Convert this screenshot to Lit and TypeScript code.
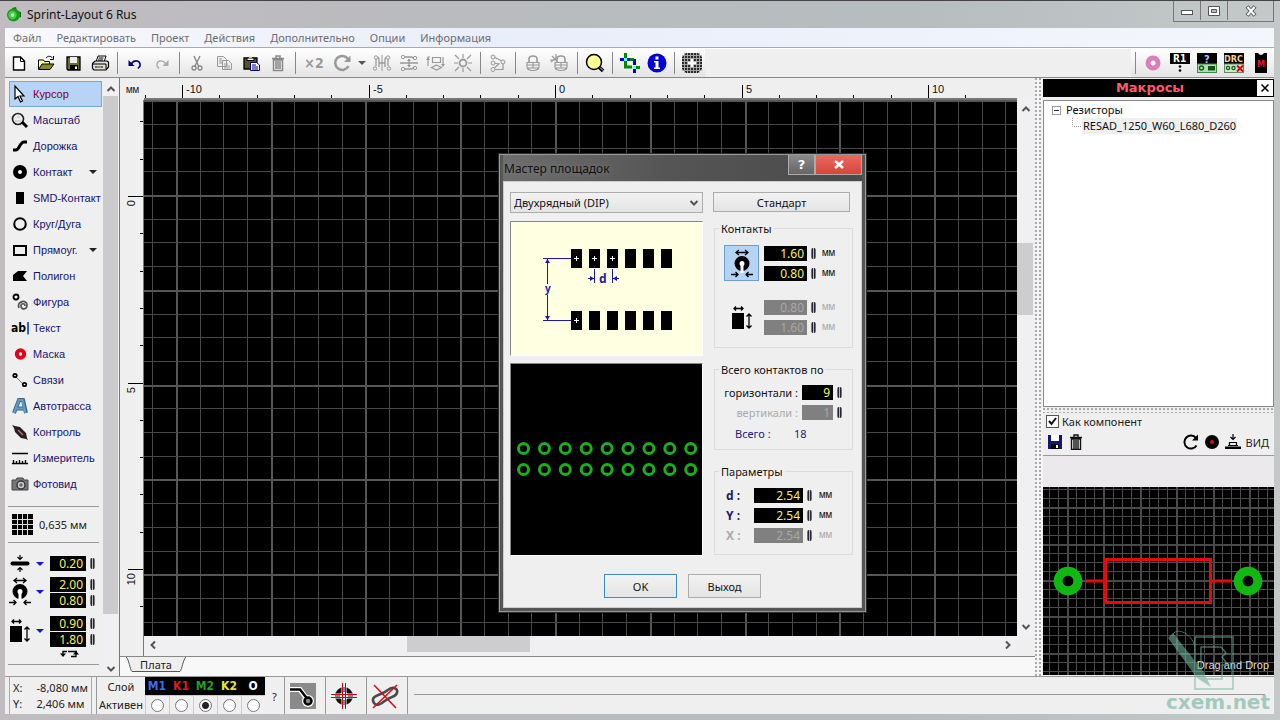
import { LitElement, html, svg, css } from "lit";
import { customElement } from "lit/decorators.js";

const icon = (body: unknown, w = 20, h = 20) =>
  html`<svg width=${w} height=${h} viewBox="0 0 ${w} ${h}" aria-hidden="true">${body}</svg>`;

const range = (from: number, to: number) =>
  Array.from({ length: Math.max(0, to - from + 1) }, (_, i) => from + i);

/* Icons of the upper toolbar */
const I = {
  file: svg`<path d="M4.500 4h7l4 4v9h-11z" fill="#fff" stroke="#000" stroke-width="1.400"/><path d="M11.500 4v4.500H16" fill="none" stroke="#000"/>`,
  open: svg`<path d="M2.500 16V7h5l1 1.500h5V11" fill="#ffff9c" stroke="#000"/><path d="M2.500 16.500 6 11h12l-4 5.500z" fill="#8a8a2c" stroke="#000"/><path d="M10 5c2-2.500 5-2 6.500 0M17.500 3v3.500H14" fill="none" stroke="#000"/>`,
  save: svg`<path d="M4 4h13v13H5l-1-1z" fill="#6e6e28" stroke="#000" stroke-width="1.300"/><path d="M7 4h7v6H7z" fill="#eee"/><path d="M7 12h8v5H7z" fill="#000"/><path d="M12 13.500h2V16h-2z" fill="#fff"/>`,
  print: svg`<path d="M6 9 8 3h8l-2 6" fill="#fff" stroke="#000"/><path d="M8.500 5h5M8 7h5" stroke="#000"/><path d="M2.500 10.500 5 8h12l1.500 1v5L16 17H4l-1.500-1.500z" fill="#ddd" stroke="#000" stroke-width="1.200"/><path d="M3 11h13v5M5 14h8" fill="none" stroke="#000"/><path d="M7 14h4" stroke="#cc0" stroke-width="1"/>`,
  undo: svg`<path d="M6 11.500C9 6 16 7 15 13l-2 2.500" fill="none" stroke="#00007c" stroke-width="1.600"/><path d="M3.500 7v6h6z" fill="#00007c"/>`,
  redo: svg`<path d="M14 11.500C11 6 4 7 5 13l2 2.500" fill="none" stroke="#aaa" stroke-width="1.400"/><path d="M16.500 7v6h-6z" fill="#aaa"/>`,
  cut: svg`<path d="M7 3l4.500 10M13 3 8 13" stroke="#888" stroke-width="1.400" fill="none"/><circle cx="7" cy="15" r="2" fill="none" stroke="#888" stroke-width="1.300"/><circle cx="13" cy="15" r="2" fill="none" stroke="#888" stroke-width="1.300"/>`,
  copy: svg`<path d="M3.500 3.500h6l3 3v7h-9zM8.500 7.500h6l3 3v6h-9z" fill="#eee" stroke="#999"/><path d="M5 6h3M5 8h3M5 10h3M10 11h4M10 13h6M10 15h6" stroke="#999"/>`,
  paste: svg`<path d="M3 5h13v11H3z" fill="#55552a" stroke="#000" stroke-width="1.300"/><path d="M6 5h7v2.500H6z" fill="#ffd" stroke="#000"/><path d="M8 3.500h3V5H8z" fill="#dd5"/><path d="M9.500 9.500h6l3 2.500v5.500h-9z" fill="#fff" stroke="#00007c"/><path d="M11 12h4M11 14h6M11 16h6" stroke="#00007c"/>`,
  trash: svg`<path d="M4 5.500h12M8 5V3h4v2M5.500 7h9v10.500h-9zM8 8v8M10 8v8M12 8v8" fill="none" stroke="#888" stroke-width="1.500"/>`,
  turn: svg`<path d="M15.500 13A7 7 0 1 1 15 6" fill="none" stroke="#999" stroke-width="2.500"/><path d="M17.500 2.500v6.500H11z" fill="#999"/>`,
  caret: svg`<path d="M1 3h8l-4 4z" fill="#555"/>`,
  mirror: svg`<path d="M10 2v16" stroke="#999"/><path d="M4 6v7M6 4l1 2v8M16 6v7M14 4l-1 2v8M7 10h6" fill="none" stroke="#999" stroke-width="1.300"/><circle cx="4" cy="4.500" r="1.700" fill="none" stroke="#999"/><circle cx="3" cy="15.500" r="1.700" fill="none" stroke="#999"/><circle cx="16" cy="4.500" r="1.700" fill="none" stroke="#999"/><circle cx="17" cy="15.500" r="1.700" fill="none" stroke="#999"/>`,
  flip: svg`<path d="M1 10h18M5 4h8l2 2M5 16h8l2-2M10 6v8" fill="none" stroke="#999" stroke-width="1.300"/><path d="M8 8l2-2.500L12 8zM8 12l2 2.500 2-2.500z" fill="#999"/><circle cx="4" cy="4" r="1.700" fill="none" stroke="#999"/><circle cx="16" cy="5" r="1.700" fill="none" stroke="#999"/><circle cx="4" cy="16" r="1.700" fill="none" stroke="#999"/><circle cx="16" cy="15" r="1.700" fill="none" stroke="#999"/>`,
  align: svg`<path d="M6.500 4.500h8v5h-8zM10.500 12l5 2.500-5 2.500-5-2.500zM4 4H2v9M17 4v9" fill="none" stroke="#999" stroke-width="1.200"/><path d="M0 7l2-3 2 3zM15 11l2 3 2-3z" fill="#999"/>`,
  snap: svg`<circle cx="10" cy="10" r="3.500" fill="none" stroke="#999" stroke-width="1.800"/><path d="M10 1v4M10 15v4M1 10h4M15 10h4M2 2l4 4M18 2l-4 4M2 18l4-4M18 18l-4-4" stroke="#999" stroke-width="1.200"/>`,
  nodes: svg`<path d="M5 3.500l10 5v8H5M5 16l6-5-6-1M15 10v6" fill="none" stroke="#999" stroke-width="1.200"/><circle cx="5" cy="4" r="2" fill="#eee" stroke="#999"/><circle cx="5" cy="10" r="2" fill="#eee" stroke="#999"/><circle cx="5" cy="16.500" r="2" fill="#eee" stroke="#999"/><circle cx="15" cy="9" r="2" fill="#eee" stroke="#999"/>`,
  lock: svg`<path d="M6 9V6q0-3 4-3t4 3v3" fill="none" stroke="#999" stroke-width="1.600"/><path d="M4 9.500h12v4q0 4-6 4t-6-4zM4 12h12M5 15h10M10 10v5" fill="none" stroke="#999" stroke-width="1.200"/>`,
  unlock: svg`<path d="M7 9V6q0-3 4-3t4 3v3" fill="none" stroke="#999" stroke-width="1.600"/><path d="M5 9.500h12v4q0 4-6 4t-6-4zM5 12h12M6 15h10M11 10v5M2 3l5 5M6 1v6M0 7h7M7 4 1 9" fill="none" stroke="#999" stroke-width="1.200"/>`,
  zoom: svg`<circle cx="9" cy="9" r="7.500" fill="#ffff94" stroke="#000" stroke-width="1.500"/><path d="M14 14l4 4" stroke="#000" stroke-width="3.500"/><path d="M15 14.500l3 3" stroke="#ccc" stroke-width="1"/>`,
  crop: svg`<path d="M5.500 0v6M5.500 8v6H12M14 14.500h6M9 6.500h5" fill="none" stroke="#008a00" stroke-width="3"/><path d="M0 6.500h5M14.500 6v6M14.500 15v5M7 6.500h3" fill="none" stroke="#00d" stroke-width="3"/><path d="M4 5h3v3H4zM13 13h3v3h-3z" fill="#5ff"/>`,
  info: svg`<circle cx="10" cy="10" r="9.500" fill="#0000d8"/><path d="M8.500 3.500h3v3h-3zM7 8h4.500v6.500H13V16H7v-1.500h1.500v-5H7z" fill="#fff"/>`,
  net: svg`<path d="M4 0h12l4 4v12l-4 4H4l-4-4V4z" fill="#2a2a2a"/><path d="M0 2.500h20M0 5.500h20M0 8.500h20M0 11.500h20M0 14.500h20M0 17.500h20M2.500 0v20M5.500 0v20M8.500 0v20M11.500 0v20M14.500 0v20M17.500 0v20" stroke="#b0b0b0" stroke-width=".9"/><path d="M10 6v8M6 10h8" stroke="#fff" stroke-width="2.400"/>`,
};

/* Icons of the tool column, 20 x 20 */
const T = {
  cursor: svg`<path d="M5 2v13l3-2.500 2.500 5.500 2-1-2.500-5h4z" fill="#fff" stroke="#000" stroke-width="1.200"/>`,
  zoom: svg`<circle cx="8" cy="9" r="5.500" fill="#eee" stroke="#222" stroke-width="1.600"/><path d="M5 11h6M7 7h3" stroke="#bbb"/><path d="M12 12l5 5" stroke="#000" stroke-width="3"/>`,
  track: svg`<path d="M3 14h3c3 0 4-8 8-8h3" fill="none" stroke="#000" stroke-width="3"/>`,
  pad: svg`<circle cx="10" cy="10" r="4.500" fill="#fff" stroke="#000" stroke-width="5"/>`,
  smd: svg`<path d="M6 4h8v12H6z"/>`,
  circle: svg`<circle cx="10" cy="10" r="5.800" fill="none" stroke="#000" stroke-width="2"/>`,
  rect: svg`<path d="M4 6h12v9H4z" fill="none" stroke="#000" stroke-width="2"/>`,
  poly: svg`<path d="M3 15V9l5-4h9l-4 5 4 5z"/>`,
  shape: svg`<circle cx="6" cy="5" r="2.500" fill="#fff" stroke="#000" stroke-width="1.800"/><path d="M9 16c-3-7 8-9 8-3 0 5-6 5-6 1 0-3 4-3 4 0" fill="none" stroke="#555" stroke-width="1.700"/>`,
  mask: svg`<circle cx="10.500" cy="10" r="3.700" fill="#fff" stroke="#e00018" stroke-width="4"/>`,
  link: svg`<path d="M5 6l9 9" stroke="#777"/><circle cx="5" cy="5.500" r="2.600"/><circle cx="14.500" cy="14.500" r="2.600"/><circle cx="5" cy="5.500" r=".8" fill="#fff"/><circle cx="14.500" cy="14.500" r=".8" fill="#fff"/>`,
  auto: svg`<path d="M4 17 9 4h4l3 13M6 12.500h8" fill="none" stroke="#467" stroke-width="4"/><path d="M4 17 9 4h3.500l3 13M6 12.500h8" fill="none" stroke="#5b9bd0" stroke-width="2.200"/>`,
  test: svg`<path d="M2 3l3 1 5 1 6 6 1 5 1 2-2-1-5-1-6-6-1-4z" fill="#222"/><path d="M8 8l5 5" stroke="#c66" stroke-width="1.500"/>`,
  measure: svg`<path d="M2 5.500h16M2 15.500h16M3.500 12v3M6.500 13v2M9.500 12v3M12.500 13v2M15.500 12v3" stroke="#000" stroke-width="1.300"/>`,
  photo: svg`<path d="M2 6h4l1-2h6l1 2h4v10H2z" fill="#777" stroke="#444"/><circle cx="11" cy="11" r="4" fill="#ccc" stroke="#333" stroke-width="1.400"/><circle cx="11" cy="11" r="1.800" fill="#667"/>`,
};

const tools: [string, unknown, string?][] = [
  ["Курсор", T.cursor, "on"], ["Масштаб", T.zoom], ["Дорожка", T.track],
  ["Контакт", T.pad, "menu"], ["SMD-Контакт", T.smd], ["Круг/Дуга", T.circle],
  ["Прямоуг.", T.rect, "menu"], ["Полигон", T.poly], ["Фигура", T.shape],
  ["Текст", null], ["Маска", T.mask], ["Связи", T.link], ["Автотрасса", T.auto],
  ["Контроль", T.test], ["Измеритель", T.measure], ["Фотовид", T.photo],
];

/* Size glyphs shared by the tool column and the dialog */
const ringSize = svg`<path d="M5 3.500h12M8 1 5 3.500 8 6M14 1l3 2.500L14 6" fill="none" stroke="#000" stroke-width="1.300"/><circle cx="11" cy="14.500" r="5" fill="#fff" stroke="#000" stroke-width="5"/><path d="M9.500 15h3v9h-3z" fill="#fff"/><path d="M0 25.500h7M15 25.500h7M4.500 23 7 25.500 4.500 28M17.500 23 15 25.500l2.500 2.500" fill="none" stroke="#000" stroke-width="1.300"/>`;
const smdSize = svg`<path d="M2 3.500h9M4 1.500 2 3.500l2 2M9 1.500l2 2-2 2" fill="none" stroke="#000" stroke-width="1.300"/><path d="M0 8h12v16H0z"/><path d="M17 9v14M14.500 11.500 17 9l2.500 2.500M14.500 20.500 17 23l2.500-2.500" fill="none" stroke="#000" stroke-width="1.300"/>`;
const lineSize = svg`<path d="M2.500 8.500h15" stroke="#000" stroke-width="4" stroke-linecap="round"/><path d="M10 0v4M7.500 2 10 4.500 12.500 2M10 17v-4M7.500 15l2.500-2.500 2.500 2.500" fill="none" stroke="#000" stroke-width="1.200"/>`;

const chevron = (deg: number) =>
  icon(svg`<path d="M1.500 7 5 3.500 8.500 7" transform="rotate(${deg} 5 5)" fill="none" stroke="#555" stroke-width="2"/>`, 10, 10);

const MINOR = 23.7;
const TICK = 37.3;

@customElement("spin-field")
export class SpinField extends LitElement {
  static properties = {
    value: { type: String },
    name: { type: String },
    disabled: { type: Boolean },
  };
  declare value: string;
  declare name: string;
  declare disabled: boolean;

  static styles = css`
    :host { display: flex; align-items: center; gap: 4px; min-width: 0; }
    input {
      box-sizing: border-box; flex: 1; width: 0; min-width: 0; height: 15px; padding: 0 3px; margin: 0;
      border: 0; border-radius: 0; background: #000; color: #f4f45a;
      font: 12px/15px "Noto Sans", sans-serif; text-align: right;
    }
    input:disabled { background: #808080; color: #a8a8a8; }
    button {
      width: 5px; height: 11px; padding: 0; border: 0; border-radius: 2px;
      background: linear-gradient(90deg, #999, #111 35%, #bbb 50%, #113 65%, #999);
    }
  `;

  render() {
    return html`<input aria-label=${this.name} .value=${this.value} ?disabled=${this.disabled} />
      <button aria-label="±"></button>`;
  }
}

@customElement("board-view")
export class BoardView extends LitElement {
  static properties = { w: { state: true }, h: { state: true } };
  declare w: number;
  declare h: number;
  private watcher?: ResizeObserver;

  constructor() {
    super();
    this.w = 0;
    this.h = 0;
  }

  static styles = css`
    :host {
      display: grid; grid-template-columns: 24px 1fr 18px; grid-template-rows: 22px 1fr 20px;
      flex: 1; min-height: 0; min-width: 0; background: #f0eff0;
    }
    .unit { font: 11px/24px "Liberation Mono", monospace; color: #222; padding-left: 6px; }
    svg { display: block; }
    .ruler { overflow: hidden; min-width: 0; min-height: 0; position: relative; }
    .ruler svg { width: 100%; height: 100%; position: absolute; }
    text { font: 11px "Liberation Sans", sans-serif; fill: #111; }
    .top { border-bottom: 2px solid #777; }
    .left { border-right: 1px solid #777; }
    .grid { background: #000; overflow: hidden; position: relative; min-width: 0; min-height: 0; }
    .grid svg { position: absolute; width: 100%; height: 100%; }
    .bar { display: flex; background: #f0f0f2; }
    .v { flex-direction: column; }
    .bar button { border: 0; padding: 0; background: none; display: grid; place-items: center; flex: 0 0 18px; }
    .h button { height: 17px; }
    .thumb { background: #cdcdcf; }
    .v .thumb { width: 16px; }
    .h .thumb { height: 16px; }
    .a1 { flex: 125; } .a2 { flex: 72; } .a3 { flex: 303; }
    .b1 { flex: 245; } .b2 { flex: 123; } .b3 { flex: 468; }
  `;

  firstUpdated() {
    const grid = this.renderRoot.querySelector(".grid")!;
    const measure = () => {
      this.w = grid.clientWidth;
      this.h = grid.clientHeight;
    };
    measure();
    this.watcher = new ResizeObserver(measure);
    this.watcher.observe(grid);
  }

  disconnectedCallback() {
    super.disconnectedCallback();
    this.watcher?.disconnect();
  }

  private lines() {
    const out: unknown[] = [];
    const width = (i: number) => (i % 4 === 0 ? 2 : 1);
    const tone = (i: number) => (i % 4 === 0 ? "#565656" : "#484848");
    for (const i of range(-17, Math.floor((this.w - 412) / MINOR)))
      out.push(svg`<rect x=${Math.round(411 + i * MINOR)} y="0" width=${width(i)} height=${this.h} fill=${tone(i)}/>`);
    for (const i of range(-4, Math.floor((this.h - 96) / MINOR)))
      out.push(svg`<rect x="0" y=${Math.round(95 + i * MINOR)} width=${this.w} height=${width(i)} fill=${tone(i)}/>`);
    return out;
  }

  render() {
    return html`
      <div class="unit">мм</div>
      <div class="ruler top">
        <svg>${range(-11, Math.floor((this.w - 431) / TICK)).map((i) => {
          const x = Math.round(411 + i * TICK);
          return svg`<rect x=${x} y=${i % 5 ? 17 : 7} width="1" height=${i % 5 ? 3 : 13}/>
            ${i % 5 ? null : svg`<text x=${x + 4} y="15">${i}</text>`}`;
        })}</svg>
      </div>
      <div></div>
      <div class="ruler left">
        <svg>${range(-2, Math.floor((this.h - 106) / TICK)).map((i) => {
          const y = Math.round(96 + i * TICK);
          return svg`<rect x=${i % 5 ? 20 : 8} y=${y} width=${i % 5 ? 3 : 15} height="1"/>
            ${i % 5 ? null : svg`<text transform="rotate(-90 15 ${y + 4})" text-anchor="end" x="15" y=${y + 4}>${i}</text>`}`;
        })}</svg>
      </div>
      <div class="grid"><svg>${this.lines()}</svg></div>
      <div class="bar v">
        <button aria-label="Вверх">${chevron(0)}</button>
        <div class="a1"></div><div class="thumb a2"></div><div class="a3"></div>
        <button aria-label="Вниз">${chevron(180)}</button>
      </div>
      <div class="left"></div>
      <div class="bar h">
        <button aria-label="Влево">${chevron(-90)}</button>
        <div class="b1"></div><div class="thumb b2"></div><div class="b3"></div>
        <button aria-label="Вправо">${chevron(90)}</button>
      </div>
      <div></div>`;
  }
}

@customElement("pad-wizard")
export class PadWizard extends LitElement {
  static styles = css`
    :host {
      display: block; box-sizing: border-box; width: 367px; background: #555;
      border: 1px solid #999; outline: 1px solid #2c2c2c; padding: 0 3px 3px;
      font: 11px/15px "Noto Sans", sans-serif; color: #111;
    }
    .title { display: flex; height: 26px; background: linear-gradient(90deg, #6e6e6e, #555 45%, #4a4a4a); }
    .title span { flex: 1; font-size: 12px; line-height: 28px; color: #111; padding-left: 1px; text-shadow: 0 0 6px #888; }
    .title button { height: 20px; padding: 0; border: 1px solid #aaa; border-top: 0; color: #fff; font: bold 13px/18px "DejaVu Sans", sans-serif; }
    .help { width: 27px; background: linear-gradient(#8a8a8a, #666); }
    .close { width: 47px; background: linear-gradient(#e86a60, #d8453d); display: grid; place-items: center; }
    .body { background: #f0eff0; border: 1px solid #ccc; padding: 10px 11px 9px 6px; }
    .cols { display: grid; grid-template-columns: 193px 1fr; gap: 10px; }
    .colA { display: flex; flex-direction: column; }
    .combo { display: grid; }
    select, .std, .ok, .exit {
      box-sizing: border-box; font: 11px/15px "Noto Sans", sans-serif; color: #111; border: 1px solid #acacac; border-radius: 0;
      background: linear-gradient(#f2f2f2, #e4e4e4);
    }
    select { appearance: none; grid-area: 1 / 1; height: 21px; padding: 0 3px; width: 100%; }
    .combo svg { grid-area: 1 / 1; justify-self: end; align-self: center; margin-right: 4px; pointer-events: none; }
    .std { width: 137px; height: 20px; display: block; margin: 0; padding: 0; }
    .scheme, .preview { display: block; width: 191px; border: 1px solid #fff; border-top-color: #888; border-left-color: #888; }
    .scheme { background: #ffffe1; margin-top: 8px; }
    .preview { background: #000; margin-top: 7px; }
    fieldset { box-sizing: border-box; width: 139px; margin: 0 0 0 1px; padding: 0; border: 1px solid #dcdcdc; min-width: 0; display: block; }
    legend { margin-left: 4px; padding: 0 2px; line-height: 15px; }
    .f1 { height: 127px; margin-top: 9px; }
    .f2 { height: 88px; margin-top: 14px; }
    .f3 { height: 91px; margin-top: 14px; }
    .pad { display: grid; grid-template-columns: 34px 52px 1fr; column-gap: 6px; margin: 9px 0 0 9px; height: 36px; align-items: center; }
    .smd { margin-top: 18px; }
    .stack { display: grid; grid-template-columns: minmax(0, 1fr); gap: 5px; }
    .mm { display: grid; gap: 5px; font: 11px/15px "Liberation Mono", monospace; }
    .dim { color: #aaa; }
    .kind { width: 35px; height: 36px; border: 1px solid transparent; padding: 0; background: none; display: grid; place-items: center; }
    .kind.on { background: #b4d4f6; border-color: #6b9fd0; }
    .count { display: grid; grid-template-columns: 1fr 40px; gap: 5px 4px; margin: 8px 10px 0 0; text-align: right; }
    .total { display: grid; grid-template-columns: 59px 1fr; margin: 6px 0 0 20px; color: #1a1a80; }
    .par { display: grid; grid-template-columns: 21px 58px 1fr; gap: 5px 7px; margin: 9px 0 0 11px; }
    .par b { color: #1a1a70; font-size: 12px; line-height: 15px; white-space: nowrap; }
    .par b.dim { color: #aaa; }
    .par .mm { padding: 0; }
    .par .mm.dim, .mm.dim { color: #aaa; }
    .foot { display: flex; gap: 11px; margin: 18px 0 0 94px; }
    .foot button { width: 73px; height: 24px; padding: 0; }
    .foot .ok { border-color: #3c8cc8; }
  `;

  render() {
    const cols = range(0, 5);
    return html`
      <div class="title"><span>Мастер площадок</span><button class="help">?</button><button class="close" aria-label="Закрыть">
        ${icon(svg`<path d="M2 2l8 7M10 2 2 9" stroke="#fff" stroke-width="2.600"/>`, 12, 11)}</button></div>
      <div class="body">
        <div class="cols">
          <div class="colA">
            <div class="combo">
              <select aria-label="Тип"><option>Двухрядный (DIP)</option></select>${chevron(180)}
            </div>
            <svg class="scheme" viewBox="0 0 191 133" width="191" height="133">
              ${cols.map((c) => svg`<rect x=${60 + c * 18} y="27" width="11" height="19"/><rect x=${60 + c * 18} y="89" width="11" height="19"/>`)}
              <path d="M63 36.500h5M65.500 34v5M81 36.500h5M83.500 34v5M99 36.500h5M101.500 34v5M63 98.500h5M65.500 96v5" stroke="#fff"/>
              <path d="M32 36.500h28M32 98.500h28M36.500 37v25M36.500 73v25M83.500 47v14M101.500 47v14M77 56.500h6M102 56.500h6" stroke="#1a1aa8"/>
              <path d="M34 41l2.500-4 2.500 4zM34 94l2.500 4 2.500-4zM79 54l4 2.500-4 2.500zM106 54l-4 2.500 4 2.500z" fill="#1a1aa8"/>
              <text x="34" y="70" font-size="10" font-weight="bold" fill="#1a1aa8">y</text>
              <text x="88" y="61" font-size="12" font-weight="bold" fill="#1a1aa8">d</text>
            </svg>
            <svg class="preview" viewBox="0 0 191 191" width="191" height="191">
              ${range(0, 8).map((c) => svg`<circle cx=${12.5 + c * 20.9} cy="84.500" r="5" fill="none" stroke="#1cae1c" stroke-width="3"/><circle cx=${12.5 + c * 20.9} cy="105.500" r="5" fill="none" stroke="#1cae1c" stroke-width="3"/>`)}
            </svg>
          </div>
          <div>
            <button class="std">Стандарт</button>
            <fieldset class="f1">
              <legend>Контакты</legend>
              <div class="pad">
                <button class="kind on" aria-label="Круглый">${icon(ringSize, 22, 29)}</button>
                <div class="stack"><spin-field name="Диаметр" value="1.60"></spin-field><spin-field name="Отверстие" value="0.80"></spin-field></div>
                <div class="mm"><span>мм</span><span>мм</span></div>
              </div>
              <div class="pad smd">
                <button class="kind" aria-label="SMD">${icon(smdSize, 20, 25)}</button>
                <div class="stack"><spin-field name="Ширина" value="0.80" disabled></spin-field><spin-field name="Высота" value="1.60" disabled></spin-field></div>
                <div class="mm dim"><span>мм</span><span>мм</span></div>
              </div>
            </fieldset>
            <fieldset class="f2">
              <legend>Всего контактов по</legend>
              <div class="count">
                <span>горизонтали :</span><spin-field name="горизонтали" value="9"></spin-field>
                <span class="dim">вертикали :</span><spin-field name="вертикали" value="1" disabled></spin-field>
              </div>
              <div class="total"><span>Всего :</span><span>18</span></div>
            </fieldset>
            <fieldset class="f3">
              <legend>Параметры</legend>
              <div class="par">
                <b>d :</b><spin-field name="d" value="2.54"></spin-field><span class="mm">мм</span>
                <b>Y :</b><spin-field name="Y" value="2.54"></spin-field><span class="mm">мм</span>
                <b class="dim">X :</b><spin-field name="X" value="2.54" disabled></spin-field><span class="mm dim">мм</span>
              </div>
            </fieldset>
          </div>
        </div>
        <div class="foot"><button class="ok">OK</button><button class="exit">Выход</button></div>
      </div>`;
  }
}

@customElement("app-root")
export class AppRoot extends LitElement {
  static styles = css`
    :host {
      display: flex; flex-direction: column; height: 100vh; box-sizing: border-box; position: relative; overflow: hidden;
      padding: 0 6px 6px 5px; border-top: 1px solid #444;
      background: linear-gradient(90deg, #c0bcc0, #b9bbbe 40%, #b5bdbf 70%, #c4c8c8);
      font: 11px/15px "Noto Sans", sans-serif; color: #222;
    }
    button { font: inherit; color: inherit; padding: 0; border: 0; background: none; }
    svg { display: block; }
    .title { display: flex; height: 27px; align-items: flex-start; }
    .title svg { margin: 5px 5px 0 1px; }
    .title h1 { margin: 0; flex: 1; font: 12px/27px "Noto Sans", sans-serif; color: #111; }
    .win { display: flex; border: 1px solid #777; border-top: 0; height: 20px; }
    .win button { width: 27px; height: 19px; display: grid; place-items: center; border-right: 1px solid #777; }
    .win button svg { margin: 0; }
    .win .x { width: 45px; border: 0; }
    nav { display: flex; gap: 15px; height: 19px; padding-left: 8px; background: linear-gradient(90deg, #f8f8fc, #e8eefa 40%, #f4f6fc); border-bottom: 1px solid #aaa; }
    nav a { color: #6d6d72; text-decoration: none; line-height: 20px; }
    .bar { display: flex; height: 30px; background: #f0eff0; border-bottom: 1px solid #888; border-top: 1px solid #fff; box-sizing: border-box; }
    .grp { display: flex; background: linear-gradient(#fff, #e4e4e4); }
    .grp button { width: 27px; display: grid; place-items: center; }
    .grp .x2 { width: 30px; font: bold 14px "DejaVu Sans Condensed", sans-serif; color: #999; }
    .grp .drop { width: 12px; }
    .sep { width: 8px; display: grid; place-items: center; }
    .sep::before { content: ""; width: 1px; height: 22px; background: #888; }
    .space { flex: 1; }
    .main { display: flex; flex: 1; min-height: 0; background: #f0eff0; }
    .tools { width: 98px; padding: 3px 0 0 4px; box-sizing: border-box; }
    .tool { width: 93px; height: 26px; display: grid; grid-template-columns: 21px 1fr 14px; align-items: center; text-align: left; padding-left: 1px; color: #14146e; white-space: nowrap; font: 11px/15px "Liberation Sans", sans-serif; column-gap: 2px; }
    .tool.on { background: #b8d4f4; border: 1px solid #7aa6d4; color: #7a0030; padding: 0; }
    .tool.wide span { grid-column: 2 / 4; }
    .ab { font: bold 12px/15px "DejaVu Sans Condensed", sans-serif; color: #000; padding-left: 1px; }
    .rule { border-top: 1px solid #999; margin: 9px 4px 0 -1px; }
    .step { display: flex; align-items: center; gap: 6px; height: 35px; padding-left: 3px; }
    .rule.tight { margin-top: 0; }
    .sizes { display: grid; grid-template-columns: 21px 10px 45px; column-gap: 5px; align-items: center; padding-top: 12px; }
    .sizes svg { justify-self: center; }
    .sizes .one { grid-column: 3; }
    .stack { display: grid; grid-template-columns: minmax(0, 1fr); gap: 1px; margin: 5px 0 3px; grid-column: 3; }
    .swap { display: grid; justify-content: end; padding-right: 24px; height: 8px; }
    .rule.last { margin-top: 6px; }
    .tscroll { width: 15px; display: flex; flex-direction: column; background: #f0f0f2; margin-top: 3px; }
    .tscroll button { height: 15px; display: grid; place-items: center; }
    .tscroll .thumb { flex: 1; background: #cbcbcd; }
    .tscroll .end { height: 47px; }
    .tscroll .down { height: 15px; }
    .center { flex: 1; min-width: 0; display: flex; flex-direction: column; border-left: 1px solid #777; margin-left: 1px; }
    .tabs { height: 19px; display: flex; background: #f8f8f8; border-top: 1px solid #888; }
    .tab { width: 60px; height: 15px; margin: 0 0 0 6px; display: grid; place-items: center; position: relative; }
    .tab svg { grid-area: 1 / 1; }
    .tab span { grid-area: 1 / 1; z-index: 1; }
    .split { width: 8px; background: radial-gradient(circle at 1px 1px, #aaa 1px, transparent 1px) 0 0 / 4px 4px #f4f4f4; }
    .macro { width: 231px; display: flex; flex-direction: column; }
    .mhead { display: flex; height: 18px; background: #000; align-items: center; margin: 1px 0 3px; padding-right: 1px; }
    .mhead h2 { flex: 1; margin: 0; text-align: center; font: bold 13px/18px "DejaVu Sans", sans-serif; color: #ff5a6a; }
    .mhead button { width: 16px; height: 16px; background: #fff; display: grid; place-items: center; }
    .tree { flex: 1; min-height: 0; background: #fff; border: 1px solid #888; padding: 1px 8px; margin: 0; list-style: none; line-height: 16px; color: #111; }
    .tree ul { margin: 0; padding: 0; list-style: none; }
    .tree .row { display: flex; align-items: center; gap: 5px; height: 16px; }
    .tree .leaf { gap: 1px; padding-left: 20px; }
    .leaf span { background: #f0eff0; padding: 0 1px; }
    .dots { height: 5px; margin-top: 1px; background: radial-gradient(circle at 1px 1px, #aaa 1px, transparent 1px) 0 0 / 4px 4px; }
    .check { display: flex; align-items: center; gap: 3px; height: 16px; padding: 0 0 0 3px; }
    .check input { appearance: none; box-sizing: border-box; width: 13px; height: 13px; margin: 0; border: 1px solid #555; background: #fff; grid-area: 1 / 1; }
    .box { display: grid; place-items: center; }
    .box svg { grid-area: 1 / 1; pointer-events: none; z-index: 1; }
    .acts { display: flex; gap: 5px; height: 26px; align-items: center; padding: 0 5px 0 4px; }
    .acts button { display: grid; }
    .strip { height: 31px; border-top: 1px solid #999; background: #ebe9eb; }
    .prev { height: 188px; margin-bottom: 1px; background: #000; position: relative; overflow: hidden; }
    .prev span { position: absolute; right: 5px; bottom: 2px; color: #ddd; font: 11px/15px "Liberation Sans", sans-serif; }
    .status { display: flex; height: 38px; background: #f0eff0; gap: 4px; padding-left: 4px; border-top: 1px solid #999; box-sizing: border-box; }
    .xy { width: 83px; box-sizing: border-box; border: 1px solid #aaa; border-width: 0 1px 0 1px; display: grid; grid-template-columns: 1fr auto; padding: 3px 3px 3px 3px; align-content: space-between; }
    .xy b { font-weight: 400; }
    .layers { display: grid; grid-template-columns: 48px repeat(5, 24px); grid-template-rows: 18px 1fr; border-left: 1px solid #999; }
    .layers > * { display: grid; place-items: center; }
    .layers .name { background: #000; font: bold 12px/18px "DejaVu Sans Condensed", sans-serif; }
    .layers .cell { border-left: 1px solid #ccc; border-top: 1px solid #ccc; }
    .layers .m1 { color: #3c6cf0; } .layers .k1 { color: #e01820; } .layers .m2 { color: #22a022; } .layers .k2 { color: #e8e820; } .layers .o { color: #fff; }
    .layers input { appearance: none; box-sizing: border-box; width: 13px; height: 13px; margin: 0; border: 1px solid #777; border-radius: 50%; background: #fff; }
    .layers input:checked { background: radial-gradient(circle, #222 3px, #fff 4px); }
    .q { width: 11px; text-align: center; padding-top: 12px; font-size: 11px; }
    .ind { width: 36px; display: grid; place-items: center; border-left: 1px solid #999; }
    .long { flex: 1; border-left: 1px solid #999; padding: 17px 1px 0 6px; margin-right: 8px; }
    .long hr { margin: 0; border: 0; border-top: 1px solid #999; }
    pad-wizard { position: absolute; left: 499px; top: 153px; box-shadow: 0 0 2px #000; }
    .mark { position: absolute; right: 10px; bottom: 7px; opacity: 0.6; pointer-events: none; color: #6db39c; display: grid; }
    .mark svg { margin-left: 2px; }
    .mark strong { font: bold 20px/22px "DejaVu Sans", sans-serif; }
  `;

  private btn(label: string, body: unknown, w = 20, h = 20, cls = "") {
    return html`<button class=${cls} aria-label=${label}>${icon(body, w, h)}</button>`;
  }

  private tool([label, body, mode]: [string, unknown, string?]) {
    const cls = "tool" + (mode === "on" ? " on" : "") + (mode ? "" : " wide");
    return html`<button class=${cls}>${body ? icon(body) : html`<b class="ab">ab|</b>`}<span>${label}</span>
      ${mode === "menu" ? icon(svg`<path d="M1 3h8l-4 4z" fill="#222"/>`, 10, 10) : null}</button>`;
  }

  private preview() {
    const g: unknown[] = [];
    for (let i = -10; i <= 40; i++) {
      const big = i % 4 === 0;
      const x = Math.round(24 + i * 9.1);
      const y = Math.round(93 + i * 9.1);
      const w = big ? 2 : 1;
      g.push(svg`<rect x=${x} y="0" width=${w} height="188" fill="#4a4a4a"/><rect x="0" y=${y} width="2000" height=${w} fill="#4a4a4a"/>`);
    }
    return html`<svg width="100%" height="188">${g}
      <path d="M43 94h20M168 94h21M62.500 72.500h105v43h-105z" fill="none" stroke="#e00c10" stroke-width="3"/>
      <circle cx="25" cy="94" r="9.800" fill="none" stroke="#10b810" stroke-width="9"/><circle cx="25" cy="94" r="5.300"/>
      <circle cx="205" cy="94" r="9.800" fill="none" stroke="#10b810" stroke-width="9"/><circle cx="205" cy="94" r="5.300"/></svg>`;
  }

  render() {
    const sep = html`<i class="sep"></i>`;
    const blue = svg`<path d="M1 3h8l-4 4z" fill="#1414c8"/>`;
    return html`
      <div class="title">
        ${icon(svg`<path d="M6 2l4-1 1 4 4 1v5l-4 1" fill="#1d6a1d"/><circle cx="7.500" cy="9" r="6.500" fill="#1a9a1a"/><circle cx="6.500" cy="9" r="4.200" fill="#3fd03f"/><circle cx="6.500" cy="9" r="1.800" fill="#e8ffe8"/>`, 16, 16)}
        <h1>Sprint-Layout 6 Rus</h1>
        <div class="win">
          <button aria-label="Свернуть">${icon(svg`<rect x="1.500" y="5.500" width="11" height="4" fill="#fff" stroke="#555"/>`, 14, 12)}</button>
          <button aria-label="Развернуть">${icon(svg`<path d="M1.500 1.500h11v9h-11z" fill="#fff" stroke="#555"/><path d="M4.500 4.500h5v3h-5z" fill="#bbb" stroke="#555"/>`, 14, 12)}</button>
          <button class="x" aria-label="Закрыть">${icon(svg`<path d="M2 1.500l8 9M10 1.500l-8 9" stroke="#555" stroke-width="4"/><path d="M2.500 2l7 8M9.500 2l-7 8" stroke="#fff" stroke-width="2.200"/>`, 12, 12)}</button>
        </div>
      </div>
      <nav>${["Файл", "Редактировать", "Проект", "Действия", "Дополнительно", "Опции", "Информация"].map((m) => html`<a href="#">${m}</a>`)}</nav>
      <div class="bar">
        <div class="grp">
          ${this.btn("Новый", I.file)}${this.btn("Открыть", I.open)}${this.btn("Сохранить", I.save)}${this.btn("Печать", I.print)}${sep}
          ${this.btn("Отменить", I.undo)}${this.btn("Вернуть", I.redo)}${sep}
          ${this.btn("Вырезать", I.cut)}${this.btn("Копировать", I.copy)}${this.btn("Вставить", I.paste)}${this.btn("Удалить", I.trash)}${sep}
          <button class="x2">×2</button>${this.btn("Повернуть", I.turn)}${this.btn("Угол", I.caret, 10, 10, "drop")}
          ${this.btn("Отразить по горизонтали", I.mirror)}${this.btn("Отразить по вертикали", I.flip)}${this.btn("Выровнять", I.align)}${this.btn("Привязать", I.snap)}${sep}
          ${this.btn("Связи", I.nodes)}${sep}${this.btn("Сгруппировать", I.lock)}${this.btn("Разгруппировать", I.unlock)}${sep}
          ${this.btn("Масштаб", I.zoom)}${sep}${this.btn("Шаблон", I.crop)}${this.btn("Сведения", I.info)}${sep}${this.btn("Металлизация", I.net)}
        </div>
        <div class="space"></div>
        <div class="grp">
          ${sep}
          ${this.btn("Прозрачность", svg`<circle cx="10" cy="10" r="5" fill="#fff" stroke="#dc7cb8" stroke-width="5"/>`)}
          ${this.btn("Компоненты", svg`<rect width="20" height="11"/><text x="3" y="9" font-size="10" font-weight="bold" font-family="DejaVu Sans Condensed" fill="#fff">R1</text><circle cx="10" cy="13.500" r="1.300"/><circle cx="10" cy="17.500" r="1.300"/>`)}
          ${this.btn("Свойства", svg`<rect width="20" height="11"/><text x="7" y="10" font-size="11" font-weight="bold" font-family="DejaVu Sans Condensed" fill="#aac4ff">?</text><rect x=".5" y="11" width="19" height="8.500" fill="#b4dcb4" stroke="#484"/><circle cx="4.500" cy="15" r="2" fill="none" stroke="#060" stroke-width="1.400"/><rect x="11" y="13" width="7" height="4.500" fill="#0a5a0a"/>`)}
          ${this.btn("DRC", svg`<rect width="20" height="11"/><text x="0" y="9" font-size="9" font-weight="bold" font-family="DejaVu Sans Condensed" fill="#f4d09c">DRC</text><rect x=".5" y="11" width="19" height="8.500" fill="#d0e4d0" stroke="#686"/><circle cx="4" cy="15" r="1.600" fill="none" stroke="#060" stroke-width="1.300"/><circle cx="9.500" cy="15" r="1.600" fill="none" stroke="#060" stroke-width="1.300"/><path d="M13 12.500l6 6M19 12.500l-6 6" stroke="#d00" stroke-width="1.800"/>`)}
          ${this.btn("Макросы", svg`<path d="M4 0h3q3 4 6 0h3v20H4z"/><text x="6" y="14" font-size="9" font-weight="bold" font-family="DejaVu Sans Condensed" fill="#f01020">M</text>`)}
        </div>
      </div>

      <div class="main">
        <div class="tools">
          ${tools.map((t) => this.tool(t))}
          <div class="rule"></div>
          <div class="step">
            ${icon(svg`<rect width="21" height="21"/><path d="M0 5.500h21M0 10.500h21M0 15.500h21M5.500 0v21M10.500 0v21M15.500 0v21" stroke="#ddd"/>`, 21, 21)}
            <span>0,635 мм</span>
          </div>
          <div class="rule tight"></div>
          <div class="sizes">
            ${icon(lineSize, 20, 17)}${icon(blue, 10, 10)}<spin-field class="one" name="Ширина дорожки" value="0.20"></spin-field>
            ${icon(ringSize, 22, 29)}${icon(blue, 10, 10)}
            <div class="stack"><spin-field name="Диаметр" value="2.00"></spin-field><spin-field name="Отверстие" value="0.80"></spin-field></div>
            ${icon(smdSize, 20, 25)}${icon(blue, 10, 10)}
            <div class="stack"><spin-field name="Ширина" value="0.90"></spin-field><spin-field name="Высота" value="1.80"></spin-field></div>
          </div>
          <div class="swap">${icon(svg`<path d="M8 1.500H4v4M12 6.500h5V2.500M9 1.500h9" fill="none" stroke="#000" stroke-width="1.300"/><path d="M1 3.500h6L4 7zM14 4.500h6L17 1z"/>`, 20, 8)}</div>
          <div class="rule last"></div>
        </div>
        <div class="tscroll"><button aria-label="Вверх">${chevron(0)}</button><div class="thumb"></div><div class="end"></div><button class="down" aria-label="Вниз">${chevron(180)}</button></div>
        <div class="center">
          <board-view></board-view>
          <div class="tabs"><div class="tab">${icon(svg`<path d="M0 0c3 2 4 13 6 14.500h48c2-2 3-12 6-14.500" fill="#f0eff0" stroke="#555"/>`, 60, 15)}<span>Плата</span></div></div>
        </div>
        <div class="split"></div>
        <div class="macro">
          <div class="mhead"><h2>Макросы</h2><button aria-label="Закрыть">${icon(svg`<path d="M1.500 1.500l7 7M8.500 1.500l-7 7" stroke="#000" stroke-width="1.600"/>`, 10, 10)}</button></div>
          <ul class="tree">
            <li><div class="row">${icon(svg`<rect x=".5" y=".5" width="8" height="8" fill="#fff" stroke="#999"/><path d="M2 4.500h5" stroke="#225"/>`, 9, 9)}<span>Резисторы</span></div>
              <ul><li class="row leaf">${icon(svg`<path d="M.5 0v8.500H9" fill="none" stroke="#999" stroke-dasharray="1 1"/>`, 9, 16)}<span>RESAD_1250_W60_L680_D260</span></li></ul>
            </li>
          </ul>
          <div class="dots"></div>
          <label class="check"><span class="box"><input type="checkbox" checked />${icon(svg`<path d="M2 5l2.500 3L9 2" fill="none" stroke="#111" stroke-width="2"/>`, 11, 11)}</span>Как компонент</label>
          <div class="acts">
            ${this.btn("Сохранить макрос", svg`<path d="M1 1h14v14H1z" fill="#16166e"/><path d="M4 1h8v6H4z" fill="#fff"/><path d="M4 10h8v5H4z" fill="#000"/><path d="M9 11h2v3H9z" fill="#fff"/>`, 16, 16)}
            ${this.btn("Удалить макрос", svg`<path d="M2 3.500h12M6 3V1h4v2M3.500 5h9v10.500h-9zM6 6v9M8 6v9M10 6v9" fill="none" stroke="#111" stroke-width="1.400"/>`, 16, 16)}
            <div class="space"></div>
            ${this.btn("Повернуть", svg`<path d="M13.500 11.500A6.500 6.500 0 1 1 13 4" fill="none" stroke="#000" stroke-width="2"/><path d="M15 .500v6H9z"/>`, 16, 16)}
            ${this.btn("Слой", svg`<circle cx="8" cy="8" r="7"/><circle cx="8" cy="8" r="2" fill="#d01028"/>`, 16, 16)}
            ${this.btn("Установить", svg`<path d="M8 0v5M5.500 3 8 5.500 10.500 3M4.500 8.500h7v3h-7zM3 11.500h10" fill="none" stroke="#000" stroke-width="1.200"/><path d="M0 12.500h16V15H0z"/>`, 16, 16)}
            <span>ВИД</span>
          </div>
          <div class="strip"></div>
          <div class="prev">${this.preview()}<span>Drag and Drop</span></div>
        </div>
      </div>

      <div class="status">
        <div class="xy"><b>X:</b><span>-8,080 мм</span><b>Y:</b><span>2,406 мм</span></div>
        <div class="layers">
          <span>Слой</span><b class="name m1">M1</b><b class="name k1">K1</b><b class="name m2">M2</b><b class="name k2">K2</b><b class="name o">O</b>
          <span>Активен</span>${["M1", "K1", "M2", "K2", "O"].map((n) => html`<label class="cell"><input type="radio" name="layer" aria-label=${n} ?checked=${n === "M2"} /></label>`)}
        </div>
        <div class="q">?</div>
        <div class="ind">${icon(svg`<rect width="26" height="26" fill="#8a8a8a"/><path d="M0 6.500h10l8 11" fill="none" stroke="#fff" stroke-width="5"/><circle cx="18" cy="18" r="6" fill="#fff"/><path d="M0 6.500h10l7 9" fill="none" stroke="#000" stroke-width="2.500"/><circle cx="18" cy="18" r="3.500" fill="#888" stroke="#000" stroke-width="2.500"/>`, 26, 26)}</div>
        <div class="ind">${icon(svg`<circle cx="13" cy="13" r="6.500" fill="none" stroke="#111" stroke-width="5"/><path d="M11.500 0v26M14.500 0v26M0 11.500h26M0 14.500h26" stroke="#fff" stroke-width="2"/><path d="M11.500 0v26M14.500 0v26M0 11.500h26M0 14.500h26" stroke="#c80018"/>`, 26, 26)}</div>
        <div class="ind">${icon(svg`<path d="M3 20c-4-6 4-8 9-10s6-6 11-5 4 7-2 9-7 4-10 6-6 3-8 0z" fill="none" stroke="#4a4a4a" stroke-width="2.600"/><path d="M3 2l22 23M26 2 2 25" stroke="#d01020" stroke-width="1.600"/>`, 28, 26)}</div>
        <div class="long"><hr /></div>
      </div>

      <pad-wizard></pad-wizard>
      <div class="mark">
        ${icon(svg`<path d="M0 9 5 4l30 38 8 16-14-9z" fill="#6db39c"/><path d="M5 5c5-7 18 0 22 12" fill="none" stroke="#6db39c"/><path d="M27 8h38v52H27zM33 18h20l5 6-4 4 6 8h-6v14H33z" fill="none" stroke="#6db39c" stroke-width="1.500"/>`, 68, 62)}
        <strong>cxem.net</strong>
      </div>`;
  }
}
